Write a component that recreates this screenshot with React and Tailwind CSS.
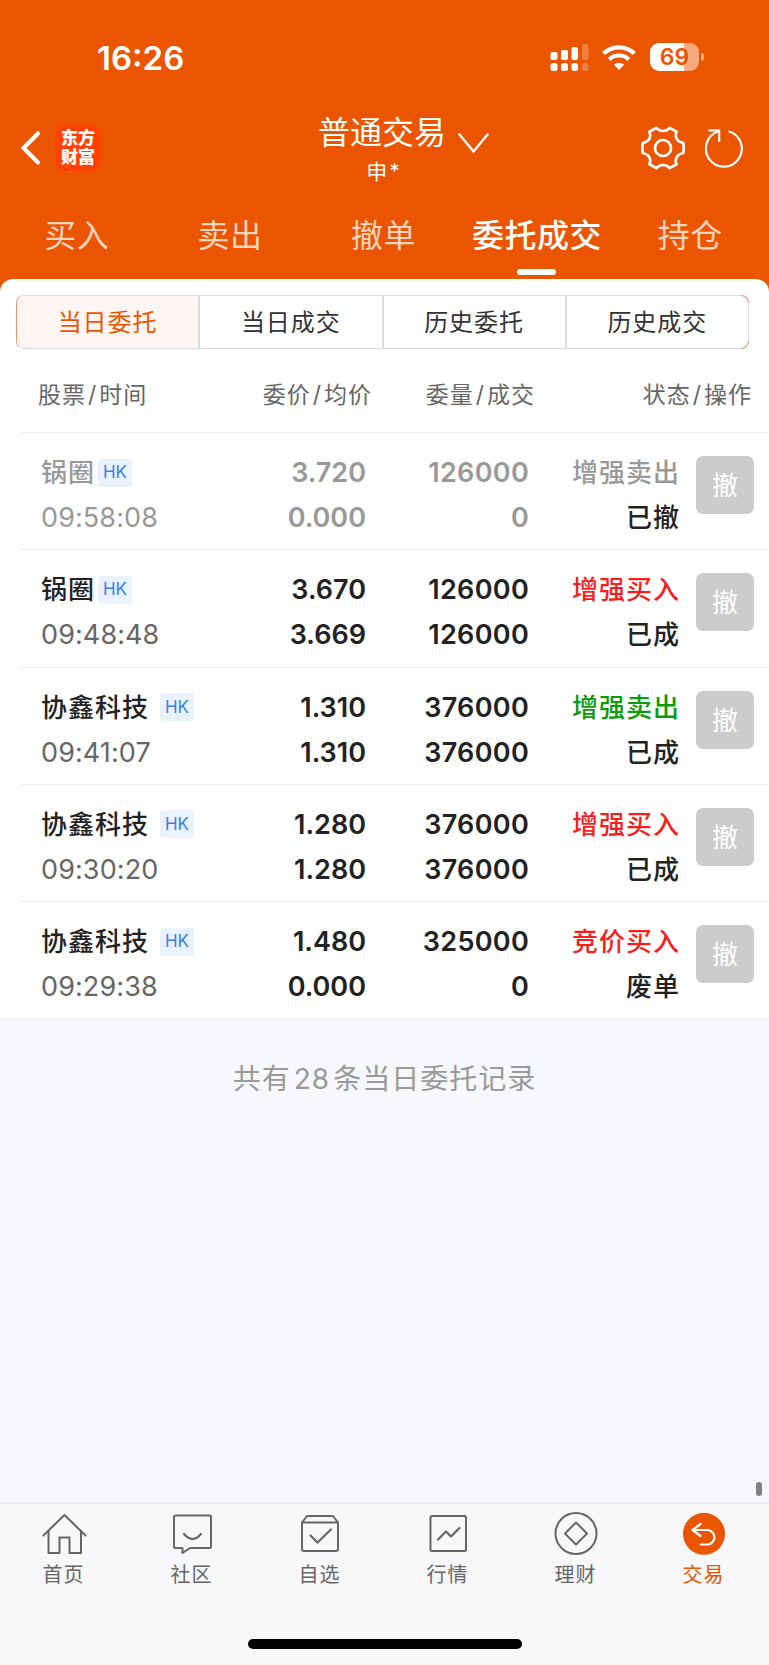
import { useState } from 'react';
import clsx from 'clsx';

const mainTabs = ['买入', '卖出', '撤单', '委托成交', '持仓'];
const subTabs = ['当日委托', '当日成交', '历史委托', '历史成交'];

const orders = [
  { name: '锅圈', time: '09:58:08', price: '3.720', avg: '0.000', qty: '126000', filled: '0', side: '增强卖出', status: '已撤', tone: 'muted' },
  { name: '锅圈', time: '09:48:48', price: '3.670', avg: '3.669', qty: '126000', filled: '126000', side: '增强买入', status: '已成', tone: 'buy' },
  { name: '协鑫科技', time: '09:41:07', price: '1.310', avg: '1.310', qty: '376000', filled: '376000', side: '增强卖出', status: '已成', tone: 'sell' },
  { name: '协鑫科技', time: '09:30:20', price: '1.280', avg: '1.280', qty: '376000', filled: '376000', side: '增强买入', status: '已成', tone: 'buy' },
  { name: '协鑫科技', time: '09:29:38', price: '1.480', avg: '0.000', qty: '325000', filled: '0', side: '竞价买入', status: '废单', tone: 'buy' },
];

const sideColor = {
  muted: 'text-[#999999]',
  buy: 'text-[#f71e1e]',
  sell: 'text-[#0a9c0a]',
};

const StatusBar = () => (
  <div className="flex h-[114px] items-center justify-between pl-[97px] pr-[65px] text-white">
    <span className="pt-0.5 text-[33px] font-semibold leading-none">16:26</span>
    <div className="flex items-center">
      <svg width="39" height="28" viewBox="0 0 39 28" fill="currentColor">
        <rect x="0.5" y="9" width="7" height="8" rx="2" />
        <rect x="11" y="7" width="7" height="10" rx="2" />
        <rect x="21.5" y="4" width="6.5" height="13" rx="2" />
        <rect x="32" y="1" width="6.5" height="16" rx="2" opacity="0.25" />
        <rect x="0.5" y="20" width="7" height="8" rx="2.5" />
        <rect x="11" y="20" width="7" height="8" rx="2.5" />
        <rect x="21.5" y="20" width="6.5" height="8" rx="2.5" />
        <rect x="32" y="20" width="6.5" height="8" rx="2.5" opacity="0.25" />
      </svg>
      <svg className="ml-[13px]" width="34" height="25" viewBox="0 0 34 25" fill="none" stroke="currentColor">
        <path d="M1.6 8.6C10 0.3 24 0.3 32.4 8.6" strokeWidth="4.2" />
        <path d="M7.2 14.4C12.6 9.2 21.4 9.2 26.8 14.4" strokeWidth="4.2" />
        <path d="M17 25L11.9 19.7C14.7 17 19.3 17 22.1 19.7Z" fill="currentColor" stroke="none" />
      </svg>
      <div className="ml-3.5 flex h-7 w-[49px] items-center justify-center rounded-[9px] bg-linear-to-r from-white from-70% to-white/50 to-70% text-[23px] font-semibold text-[#eb5500]">
        <span>69</span>
      </div>
      <div className="ml-0.5 h-2 w-[3px] rounded-r-full bg-white/50" />
    </div>
  </div>
);

const TitleBar = () => (
  <div className="flex h-[68px] items-center justify-between pl-5 pr-[25px] text-white">
    <div className="flex w-[200px] items-center">
      <svg width="22" height="36" viewBox="0 0 22 36" fill="none" stroke="currentColor" strokeWidth="4.2" strokeLinecap="round" strokeLinejoin="miter">
        <path d="M18 3.6L3.6 18L18 32.4" />
      </svg>
      <div className="ml-[13px] flex size-[46px] flex-col items-center justify-center rounded-[10px] bg-[#ff4203] text-[17px] font-black leading-[19px]">
        <span>东方</span>
        <span>财富</span>
      </div>
    </div>
    <div className="flex flex-col items-center pt-[3px]">
      <div className="flex items-center pl-[43px]">
        <span className="text-[32px] leading-[42px]">普通交易</span>
        <svg className="ml-3 mt-5" width="31" height="21" viewBox="0 0 31 21" fill="none" stroke="currentColor" strokeWidth="2.4" strokeLinecap="round" strokeLinejoin="round">
          <path d="M1.5 1.5L15.5 18.5L29.5 1.5" />
        </svg>
      </div>
      <span className="ml-1 mt-[3px] text-[21px] leading-[30px] tracking-[2px]">申*</span>
    </div>
    <div className="flex w-[200px] items-center justify-end">
      <svg width="44" height="44" viewBox="0 0 44 44" fill="none" stroke="currentColor" strokeWidth="2.7" strokeLinejoin="round">
        <path d="M15.3 1.9Q18 5 22 5T28.7 1.9L35.6 5.8Q33.9 9.3 35.6 12.6T42.3 17Q43 22 42.3 27Q37.3 28 35.6 31.4T35.6 38.2L28.7 42.1Q26 39 22 39T15.3 42.1L8.4 38.2Q10.1 34.7 8.4 31.4T1.7 27Q1 22 1.7 17Q6.7 16 8.4 12.6T8.4 5.8Z" />
        <circle cx="22" cy="22" r="8" />
      </svg>
      <svg className="ml-5" width="39" height="40" viewBox="0 0 39 40" fill="none" stroke="currentColor" strokeWidth="2.2">
        <path d="M23.5 3.2A18 18 0 1 1 13.8 3.3" />
        <path d="M3.5 2.5H14.2V14" />
      </svg>
    </div>
  </div>
);

const ColumnTitle = ({ first, second, className }) => (
  <span className={className}>
    {first}
    <span className="mx-0.5">/</span>
    {second}
  </span>
);

const OrderRow = ({ order }) => {
  const muted = order.tone === 'muted';
  const strong = muted ? 'text-[#999999]' : 'text-[#222222]';

  return (
    <div className="ml-5 flex h-[117.25px] border-t border-[#f0f0f0] pl-[21px] pr-[15px] pt-[17px] text-[27px] leading-[45px]">
      <div className="w-[184px]">
        <div className="flex items-center">
          <span className={clsx('text-[26px] font-medium tracking-[1px]', strong)}>{order.name}</span>
          <span
            className={clsx(
              'flex h-7 w-[34px] items-center justify-center rounded bg-[#e9f2fd] text-[17px] text-[#3880ec]',
              order.name.length > 2 ? 'ml-[11px]' : 'ml-[3px]'
            )}
          >
            HK
          </span>
        </div>
        <div className={clsx('tracking-[0.1px]', muted ? 'text-[#999999]' : 'text-[#666666]')}>{order.time}</div>
      </div>
      <div className={clsx('w-[141px] text-right font-semibold', strong)}>
        <div>{order.price}</div>
        <div>{order.avg}</div>
      </div>
      <div className={clsx('w-[163px] text-right font-semibold tracking-[0.3px]', strong)}>
        <div>{order.qty}</div>
        <div>{order.filled}</div>
      </div>
      <div className="w-[151px] text-right text-[26px] font-medium tracking-[1px]">
        <div className={sideColor[order.tone]}>{order.side}</div>
        <div className="text-[#222222]">{order.status}</div>
      </div>
      <button className="ml-auto mt-1.5 size-[58px] rounded-[7px] bg-[#cccccc] pt-0.5 text-[26px] leading-none text-white">撤</button>
    </div>
  );
};

const icons = {
  home: (
    <>
      <path d="M1.5 22.5L22.5 2L43.5 22.5" />
      <path d="M6.5 18V40H17.5V24.5H27.5V40H39V18" />
    </>
  ),
  community: (
    <>
      <path d="M5.5 2.5H39.5Q41 2.5 41 4V33.5Q41 35 39.5 35H20L12.5 40V35H5.5Q4 35 4 33.5V4Q4 2.5 5.5 2.5Z" />
      <path d="M14 21Q22.5 31 31 21" strokeWidth="2.2" />
    </>
  ),
  watch: (
    <>
      <path d="M4 9.5L9 3H35L40 9.5V36Q40 38 38 38H6Q4 38 4 36ZM4 9.5H40" />
      <path d="M12.5 22.5L19.5 29.5L33 16.5" strokeWidth="2.2" />
    </>
  ),
  market: (
    <>
      <rect x="4.5" y="3" width="35.5" height="35" rx="1.5" />
      <path d="M12 26.5L20 18.5L25 23.5L33.5 15" strokeWidth="2.2" />
    </>
  ),
  wealth: (
    <>
      <circle cx="22" cy="20.5" r="20.5" />
      <path d="M22 9.5L33 20.5L22 31.5L11 20.5Z" />
    </>
  ),
  trade: (
    <>
      <circle cx="22" cy="20.8" r="21" fill="currentColor" stroke="none" />
      <path d="M18.5 11L10.5 17L18.5 23M10.5 17H26A7.3 7.3 0 0 1 26 31.5H19" stroke="#ffffff" strokeWidth="2.2" />
    </>
  ),
};

const navItems = [
  { label: '首页', icon: 'home' },
  { label: '社区', icon: 'community' },
  { label: '自选', icon: 'watch' },
  { label: '行情', icon: 'market' },
  { label: '理财', icon: 'wealth' },
  { label: '交易', icon: 'trade' },
];

const BottomNav = () => (
  <nav className="flex h-[163px] flex-col border-t-2 border-[#ebebed] bg-[#f8f8fb]">
    <div className="grid grid-cols-6 pr-px pt-[9px]">
      {navItems.map((item) => (
        <div
          key={item.label}
          className={clsx('flex flex-col items-center', item.icon === 'trade' ? 'text-[#eb5500]' : 'text-[#666666]')}
        >
          <svg
            className="overflow-visible"
            width="44"
            height="43"
            viewBox="0 0 44 43"
            fill="none"
            stroke="currentColor"
            strokeWidth="2"
            strokeLinejoin="round"
            strokeLinecap="round"
          >
            {icons[item.icon]}
          </svg>
          <span className="-ml-px mt-[5px] text-[20px] leading-7 tracking-[1px]">{item.label}</span>
        </div>
      ))}
    </div>
    <div className="mx-auto mb-4 mt-auto h-[10px] w-[274px] rounded-full bg-black" />
  </nav>
);

const App = () => {
  const [mainTab, setMainTab] = useState('委托成交');
  const [subTab, setSubTab] = useState('当日委托');

  return (
    <div className="flex h-[1665px] w-[769px] flex-col overflow-hidden bg-[#f6f8fb] font-['Inter','Noto_Sans_CJK_SC',sans-serif]">
      <header className="h-[291px] bg-[#eb5500]">
        <StatusBar />
        <TitleBar />
        <div className="grid h-[97px] grid-cols-5 pr-0.5">
          {mainTabs.map((tab) => (
            <button
              key={tab}
              onClick={() => setMainTab(tab)}
              className={clsx(
                'flex flex-col items-center whitespace-nowrap pt-[31px] text-[32px] leading-[46px] tracking-[0.5px]',
                tab === mainTab ? 'font-medium text-white' : 'text-white/75'
              )}
            >
              {tab}
              {tab === mainTab && <span className="mt-[10px] h-1.5 w-[39px] rounded-full bg-white" />}
            </button>
          ))}
        </div>
      </header>

      <main className="-mt-3 rounded-t-[13px] bg-white pt-4">
        <div className="relative mx-4 flex h-[54px] w-[733px] rounded-lg border border-[#d9dce2] border-l-[#eb9a72]">
          {subTabs.map((tab) => (
            <button
              key={tab}
              onClick={() => setSubTab(tab)}
              className={clsx(
                'flex-1 border-l-2 border-[#d9dce2] pt-0.5 text-[24px] tracking-[1px] first:rounded-l-[7px] first:border-l-0',
                tab === subTab ? 'bg-[#fff5f2] text-[#eb5500]' : 'text-[#333333]'
              )}
            >
              {tab}
            </button>
          ))}
          {/* tinted right-hand corners */}
          <span className="absolute -right-px -top-px size-2 rounded-tr-lg border-r border-t border-[#eb9a72]" />
          <span className="absolute -bottom-px -right-px size-2 rounded-br-lg border-b border-r border-[#eb9a72]" />
        </div>
        <div className="flex h-[83px] items-center pl-[38px] pr-[17px] pt-[10px] text-[23px] tracking-[1px] text-[#666666]">
          <ColumnTitle first="股票" second="时间" className="w-[175px]" />
          <ColumnTitle first="委价" second="均价" className="w-[159px] text-right" />
          <ColumnTitle first="委量" second="成交" className="w-[163px] text-right" />
          <ColumnTitle first="状态" second="操作" className="ml-auto" />
        </div>
        {orders.map((order) => (
          <OrderRow key={order.time} order={order} />
        ))}
      </main>

      <p className="border-t border-[#f0f0f0] pt-[38px] text-center text-[28px] leading-[44px] tracking-[1px] text-[#999999]">
        共有<span className="mx-[3px]">28</span>条当日委托记录
      </p>

      <div className="mb-1.5 ml-auto mr-[7px] mt-auto h-3.5 w-1.5 rounded-full bg-[#7f8082]" />
      <BottomNav />
    </div>
  );
};

export default App;
